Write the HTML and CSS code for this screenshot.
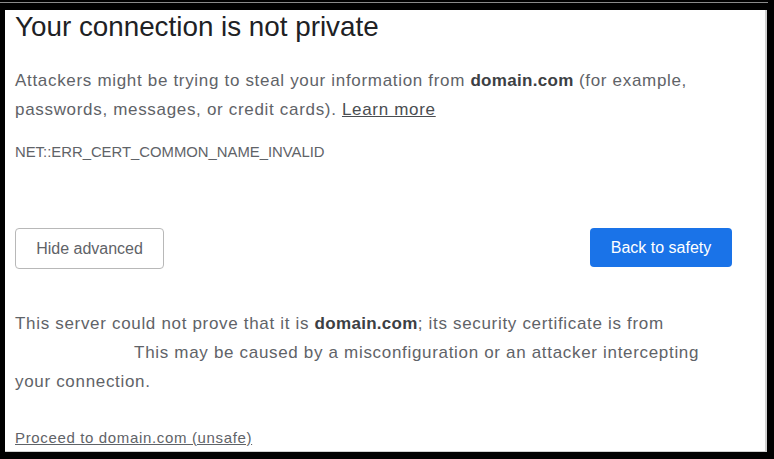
FILE: index.html
```
<!DOCTYPE html>
<html lang="en">
<head>
<meta charset="utf-8">
<title>Privacy error</title>
<link rel="stylesheet" href="styles.css">
</head>
<body>
<div class="frame">
  <div class="rule"></div>
  <main class="panel">
    <h1 class="title">Your connection is not private</h1>
    <p class="text">Attackers might be trying to steal your information from <strong>domain.com</strong> (for example, passwords, messages, or credit cards). <a class="learn" href="#">Learn more</a></p>
    <div class="code">NET::ERR_CERT_COMMON_NAME_INVALID</div>
    <div class="actions">
      <button class="btn btn-secondary">Hide advanced</button>
      <button class="btn btn-primary">Back to safety</button>
    </div>
    <p class="text details">This server could not prove that it is <strong>domain.com</strong>; its security certificate is from <span class="redacted"></span> This may be caused by a misconfiguration or an attacker intercepting your connection.</p>
    <a class="proceed" href="#">Proceed to domain.com (unsafe)</a>
  </main>
</div>
</body>
</html>
```
FILE: styles.css
```
html, body {
  margin: 0;
  padding: 0;
  background: #000;
}
.frame {
  width: 774px;
  height: 459px;
  background: #000;
  padding-top: 2px;
  box-sizing: border-box;
}
.rule {
  height: 1px;
  width: 768px;
  background: #8a8a8a;
  margin-bottom: 7px;
}
.panel {
  margin-left: 5px;
  width: 762px;
  height: 442px;
  box-sizing: border-box;
  background: #fff;
  padding: 0 35px 0 10px;
  box-shadow: inset -2px 0 0 #d0d0d0, inset 0 -1px 0 #d0d0d0;
  font-family: "Liberation Sans", Arial, sans-serif;
  color: #5f6368;
  overflow: hidden;
}
.title {
  margin: 0;
  font-size: 27.8px;
  line-height: 33px;
  font-weight: normal;
  color: #202124;
}
.text {
  margin: 23px 0 0;
  font-size: 17px;
  line-height: 29px;
  letter-spacing: 0.68px;
}
.text strong {
  color: #3c4043;
  font-weight: bold;
  letter-spacing: 0.3px;
}
.learn {
  color: #4a4d51;
  text-decoration: underline;
}
.code {
  margin-top: 18px;
  font-size: 14.85px;
  line-height: 20px;
}
.actions {
  margin-top: 66px;
  display: flex;
  justify-content: space-between;
  align-items: flex-start;
}
.btn {
  font-family: "Liberation Sans", Arial, sans-serif;
  font-size: 16px;
  border-radius: 4px;
  cursor: pointer;
}
.btn-secondary {
  width: 149px;
  height: 41px;
  background: #fff;
  color: #5f6368;
  border: 1px solid #b8b8b8;
}
.btn-primary {
  width: 142px;
  height: 39px;
  background: #1a73e8;
  color: #fff;
  border: none;
}
.details {
  margin-top: 39.6px;
}
.redacted {
  display: inline-block;
  width: 114px;
}
.proceed {
  display: block;
  margin-top: 32px;
  font-size: 15px;
  line-height: 20px;
  letter-spacing: 0.65px;
  color: #5f6368;
  text-decoration: underline;
}
```
